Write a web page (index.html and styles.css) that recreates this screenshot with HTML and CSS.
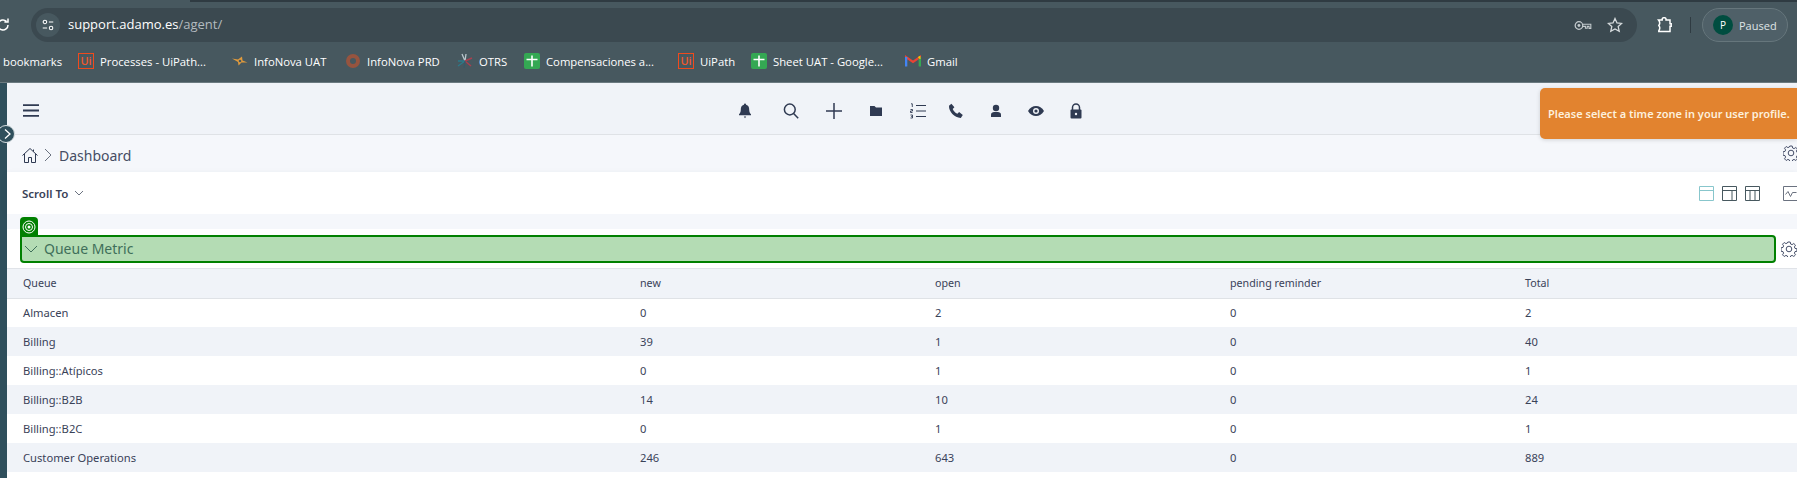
FILE: index.html
```html
<!DOCTYPE html>
<html lang="en">
<head>
  <meta charset="UTF-8" />
  <title>Dashboard</title>
  <link rel="stylesheet" href="styles.css">
</head>
<body>
  <div class="browser">
    <div class="tabstrip"><div class="tab-active"></div><div class="tab-rest"></div></div>
    <div class="toolbar">
      <svg class="reload" viewBox="0 0 16 16"><path d="M13 8a5 5 0 1 1-1.6-3.7M13 1.500v3.600H9.400" fill="none" stroke="#fff" stroke-width="1.500"/></svg>
      <div class="omnibox">
        <span class="tune">
          <svg viewBox="0 0 16 16"><circle cx="4.500" cy="4.500" r="2" fill="none" stroke="#fff" stroke-width="1.200"/><path d="M9 4.500h5M2 11.500h5" stroke="#fff" stroke-width="1.200"/><circle cx="11.500" cy="11.500" r="2" fill="none" stroke="#fff" stroke-width="1.200"/></svg>
        </span>
        <span class="url">support.adamo.es<span class="url-path">/agent/</span></span>
        <svg class="key" viewBox="0 0 20 12"><circle cx="5.500" cy="6" r="4.200" fill="none" stroke="#c4cbce" stroke-width="1.400"/><circle cx="5.500" cy="6" r="1.600" fill="#c4cbce"/><path d="M9.700 4.600h9v4.600h-2V7h-2v2h-2V7H9.700" fill="none" stroke="#c4cbce" stroke-width="1.200"/></svg>
        <svg class="star" viewBox="0 0 16 16"><path d="M8 1.500l2 4.400 4.700.5-3.500 3.200 1 4.700L8 11.900l-4.200 2.400 1-4.700L1.300 6.400l4.700-.5z" fill="none" stroke="#d6dbdd" stroke-width="1.300"/></svg>
      </div>
      <svg class="puzzle" viewBox="0 0 16 16"><path d="M1.500 3h3.700V1.800a1.300 1.300 0 0 1 1.300-1h1.300a1.300 1.300 0 0 1 1.200 1V3h4v3.800h1.200v2.400H13.000v5.300H1.800V13.800q2-2.800 0-5.300 2-2.700-.3-5.500z" fill="none" stroke="#fff" stroke-width="1.500"/></svg>
      <span class="divider"></span>
      <div class="profile"><span class="avatar">P</span><span class="paused">Paused</span></div>
    </div>
    <div class="bookmarks">
      <span class="bm bm-first">bookmarks</span>
      <span class="bm w-processes"><span class="fav-ui">Ui</span>Processes - UiPath...</span>
      <span class="bm w-uat">
        <svg class="fav" viewBox="0 0 16 16"><path d="M0 5.500l6 1 4-3 .5 4 5 2h-6l-3 3-.5-3.500z" fill="#e09a3c"/><circle cx="8" cy="8" r="1.300" fill="#47585f"/></svg>
        InfoNova UAT</span>
      <span class="bm w-prd">
        <svg class="fav" viewBox="0 0 16 16"><circle cx="8" cy="8" r="5" fill="none" stroke="#96543f" stroke-width="4"/></svg>
        InfoNova PRD</span>
      <span class="bm w-otrs">
        <svg class="fav" viewBox="0 0 16 16"><path d="M8 8L5 1M8 8l1-7" stroke="#b9c6cc" stroke-width="1.300"/><path d="M8 8L1 13M8 8H1" stroke="#2c7a8a" stroke-width="1.300"/><path d="M8 8l7-3M8 8l6 5" stroke="#a8404f" stroke-width="1.500"/><path d="M8 8l-1 7" stroke="#355a6a" stroke-width="1.300"/></svg>
        OTRS</span>
      <span class="bm w-comp"><span class="fav-sheet"><svg viewBox="0 0 16 16"><path d="M2.500 6.500h11M8 2.500v11" stroke="#fff" stroke-width="1.600"/></svg></span>Compensaciones a...</span>
      <span class="bm w-uipath"><span class="fav-ui">Ui</span>UiPath</span>
      <span class="bm w-sheet"><span class="fav-sheet"><svg viewBox="0 0 16 16"><path d="M2.500 6.500h11M8 2.500v11" stroke="#fff" stroke-width="1.600"/></svg></span>Sheet UAT - Google...</span>
      <span class="bm">
        <svg class="fav" viewBox="0 0 16 16"><path d="M1 13V4l7 5 7-5v9" fill="none" stroke="#ea4335" stroke-width="2.200"/><path d="M1 13.500V4" stroke="#4285f4" stroke-width="2.600"/><path d="M15 13.500V4" stroke="#34a853" stroke-width="2.600"/><path d="M13 4.500l2-1.200V6" fill="#fbbc04" stroke="#fbbc04"/></svg>
        Gmail</span>
    </div>
  </div>

  <div class="app">
    <aside class="sidebar"></aside>
    <span class="side-toggle"><svg viewBox="0 0 12 12"><path d="M4 1.500L9 6l-5 4.500" fill="none" stroke="#fff" stroke-width="1.300"/></svg></span>
    <main class="content">
      <header class="topbar">
        <svg class="burger" viewBox="0 0 16 13"><path d="M0 1.200h16M0 6.500h16M0 11.800h16" stroke="#2f3a52" stroke-width="1.800"/></svg>
        <nav class="topnav">
          <svg class="nav-icon" viewBox="0 0 16 16"><path d="M8 0.500a1.200 1.200 0 0 1 1.100 1.200c2.400.6 3.100 2.700 3.100 5 0 2.200.8 3.600 1.800 4.500v1H2v-1c1-.9 1.800-2.300 1.800-4.500 0-2.300.7-4.400 3.100-5A1.200 1.200 0 0 1 8 .5zM6.800 13.500h2.400L8 15.300z" fill="#2f3a52"/></svg>
          <svg class="nav-icon nudge-search" viewBox="0 0 16 16"><circle cx="6.800" cy="6.500" r="5.400" fill="none" stroke="#2f3a52" stroke-width="1.500"/><path d="M10.600 10.500l4.600 4.800" stroke="#2f3a52" stroke-width="1.500"/></svg>
          <svg class="nav-icon nudge-plus" viewBox="0 0 16 16"><path d="M0 8h16M8 0v16" stroke="#2f3a52" stroke-width="1.500"/></svg>
          <svg class="nav-icon nudge-two" viewBox="0 0 16 16"><path d="M2 3h4.500l1.500 1.500h6V13H2z" fill="#2f3a52"/></svg>
          <svg class="nav-icon nudge-two" viewBox="0 0 16 16"><path d="M6 2.500h10M6 8h10M6 13.500h10" stroke="#2f3a52" stroke-width="1"/><path d="M1 .8h1.300v3.200M.5 6.500h2v1.500H.5v1.500h2M.5 12h2v1.500h-1 1V15h-2" fill="none" stroke="#2f3a52" stroke-width=".9"/></svg>
          <svg class="nav-icon nudge-phone" viewBox="0 0 16 16"><path d="M1 2.800L3.400.8l3 3.400-1.700 1.700c.9 2 2.500 3.700 4.700 4.900l1.700-1.700 3.700 3-2 2.800C6.600 15 .6 8.600 1 2.800z" fill="#2f3a52"/></svg>
          <svg class="nav-icon" viewBox="0 0 16 16"><circle cx="8" cy="5" r="3.200" fill="#2f3a52"/><path d="M3 14v-2.500C3 9.500 5 9 8 9s5 .5 5 2.500V14z" fill="#2f3a52"/></svg>
          <svg class="nav-icon" viewBox="0 0 16 16"><path d="M0 8c2-3.400 4.800-5 8-5s6 1.600 8 5c-2 3.400-4.800 5-8 5s-6-1.600-8-5z" fill="#2f3a52"/><circle cx="8" cy="8" r="3" fill="#f0f3f8"/><circle cx="8" cy="8" r="1.600" fill="#2f3a52"/></svg>
          <svg class="nav-icon" viewBox="0 0 16 16"><path d="M4.500 7V4.500a3.500 3.500 0 0 1 7 0V7" fill="none" stroke="#2f3a52" stroke-width="1.500"/><rect x="2.500" y="6.500" width="11" height="9" rx="1" fill="#2f3a52"/><circle cx="8" cy="11" r="1.200" fill="#f0f3f8"/></svg>
        </nav>
      </header>

      <div class="crumbs">
        <svg class="home" viewBox="0 0 16 16"><path d="M0.500 8L8 1l7.500 7M2.500 6.500V15H6.500V10H9.500V15H13.500V6.500M11.500 2V4" fill="none" stroke="#2f3a52" stroke-width="1"/></svg>
        <svg class="crumb-sep" viewBox="0 0 8 14"><path d="M1 1l6 6-6 6" fill="none" stroke="#6b7280" stroke-width="1"/></svg>
        <span class="crumb-title">Dashboard</span>
        <svg class="gear gear-crumbs" viewBox="0 0 16 16"><use href="#gear-shape"/></svg>
      </div>

      <div class="scrollbar">
        <span class="scroll-to">Scroll To</span>
        <svg class="chev-small" viewBox="0 0 10 6"><path d="M1 1l4 4 4-4" fill="none" stroke="#6b7280" stroke-width="1"/></svg>
        <div class="layouts">
          <svg class="layout-icon" viewBox="0 0 15 15"><path d="M.5.500h14v14H.5zM.5 4.500h14" fill="none" stroke="#88c6cc"/></svg>
          <svg class="layout-icon" viewBox="0 0 15 15"><path d="M.5.500h14v14H.5zM.5 4.500h14M10 4.500v10" fill="none" stroke="#47585f"/></svg>
          <svg class="layout-icon" viewBox="0 0 15 15"><path d="M.5.500h14v14H.5zM.5 4.500h14M5 4.500v10M10 4.500v10" fill="none" stroke="#47585f"/></svg>
          <svg class="chart-icon" viewBox="0 0 15 15"><path d="M.5.500h14v14H.5zM2.500 8.500l2.500-3 2.500 5 2-4h4" fill="none" stroke="#6b7280"/></svg>
        </div>
      </div>

      <section class="widget">
        <div class="widget-tab">
          <svg viewBox="0 0 14 14"><circle cx="7" cy="7" r="6" fill="none" stroke="#fff"/><circle cx="7" cy="7" r="3.500" fill="none" stroke="#fff"/><circle cx="7" cy="7" r="1.500" fill="#fff"/></svg>
        </div>
        <div class="widget-row">
          <div class="widget-title">
            <svg class="chev-title" viewBox="0 0 14 8"><path d="M1 1l6 6 6-6" fill="none" stroke="#3f6f5a" stroke-width="1"/></svg>
            <span>Queue Metric</span>
          </div>
          <svg class="gear" viewBox="0 0 16 16"><use href="#gear-shape"/></svg>
        </div>
        <table class="metrics">
          <thead>
            <tr><th>Queue</th><th>new</th><th>open</th><th>pending reminder</th><th>Total</th></tr>
          </thead>
          <tbody>
            <tr><td>Almacen</td><td>0</td><td>2</td><td>0</td><td>2</td></tr>
            <tr><td>Billing</td><td>39</td><td>1</td><td>0</td><td>40</td></tr>
            <tr><td>Billing::Atípicos</td><td>0</td><td>1</td><td>0</td><td>1</td></tr>
            <tr><td>Billing::B2B</td><td>14</td><td>10</td><td>0</td><td>24</td></tr>
            <tr><td>Billing::B2C</td><td>0</td><td>1</td><td>0</td><td>1</td></tr>
            <tr><td>Customer Operations</td><td>246</td><td>643</td><td>0</td><td>889</td></tr>
          </tbody>
        </table>
      </section>
    </main>
    <div class="toast">Please select a time zone in your user profile.</div>
  </div>

  <svg class="defs" width="0" height="0">
    <defs>
      <g id="gear-shape" fill="none" stroke="#47506a" stroke-width="1">
        <circle cx="8" cy="8" r="2.800"/>
        <path d="M6.800 1h2.400l.4 2 1.500.6 1.700-1.100 1.700 1.700-1.100 1.700.6 1.500 2 .4v2.400l-2 .4-.6 1.500 1.100 1.700-1.700 1.700-1.700-1.100-1.500.6-.4 2H6.800l-.4-2-1.500-.6-1.700 1.100-1.700-1.700 1.100-1.700-.6-1.500-2-.4V6.800l2-.4.6-1.500-1.100-1.700 1.700-1.700 1.700 1.100 1.500-.6z"/>
      </g>
    </defs>
  </svg>
</body>
</html>
```

FILE: styles.css
```css
* {
  box-sizing: border-box;
}

html, body {
  margin: 0;
  height: 478px;
  overflow: hidden;
}

body {
  font-family: "Noto Sans", sans-serif;
  color: #3a4258;
  background-color: #fff;
}

/* browser chrome */
.browser {
  height: 83px;
  background-color: #47585f;
  border-bottom: 1px solid #6b7a80;
  font-family: "Open Sans", sans-serif;
  color: #fff;
}

.tabstrip {
  display: flex;
  height: 2px;
}

.tab-active {
  width: 190px;
}

.tab-rest {
  flex: 1;
  background-color: #2f3b42;
}

.toolbar {
  display: flex;
  align-items: center;
  height: 34px;
  margin-top: 6px;
}

.reload {
  width: 16px;
  height: 16px;
  margin-left: -5px;
  margin-right: 20px;
}

.omnibox {
  display: flex;
  align-items: center;
  width: 1606px;
  height: 34px;
  padding-left: 5px;
  padding-right: 14px;
  border-radius: 17px;
  background-color: #3b4950;
}

.tune {
  display: flex;
  align-items: center;
  justify-content: center;
  width: 24px;
  height: 24px;
  border-radius: 50%;
  background-color: #47585f;
}

.tune svg {
  width: 14px;
  height: 14px;
}

.url {
  flex: 1;
  margin-left: 8px;
  font-size: 13px;
  line-height: 16px;
  padding-bottom: 2px;
}

.url-path {
  color: #b3bbbf;
}

.key {
  width: 18px;
  height: 11px;
  margin-right: 15px;
}

.star {
  width: 16px;
  height: 16px;
}

.puzzle {
  width: 16px;
  height: 16px;
  margin-left: 20px;
}

.divider {
  width: 1px;
  height: 16px;
  margin-left: 17px;
  background-color: #2f3b42;
}

.profile {
  display: flex;
  align-items: center;
  width: 86px;
  height: 34px;
  margin-left: 11px;
  padding-left: 10px;
  border: 1px solid #66767c;
  border-radius: 17px;
  background-color: #4f6068;
}

.avatar {
  width: 20px;
  height: 20px;
  border-radius: 50%;
  background-color: #004d40;
  font-size: 10px;
  line-height: 20px;
  text-align: center;
}

.paused {
  margin-left: 6px;
  font-size: 11px;
  color: #dfe4e6;
}

.bookmarks {
  display: flex;
  align-items: center;
  height: 24px;
  margin-top: 7px;
  padding-left: 3px;
  font-size: 11.300px;
  white-space: nowrap;
}

.bm {
  display: flex;
  align-items: center;
  gap: 6px;
}

.bm-first { width: 75px; }
.w-processes { width: 154px; }
.w-uat { width: 113px; }
.w-prd { width: 112px; }
.w-otrs { width: 67px; }
.w-comp { width: 154px; }
.w-uipath { width: 73px; }
.w-sheet { width: 154px; }

.fav {
  width: 16px;
  height: 16px;
}

.fav-ui {
  width: 16px;
  height: 16px;
  border: 1.500px solid #f04a1c;
  color: #f0582c;
  font-size: 11px;
  font-weight: 600;
  line-height: 13px;
  text-align: center;
}

.fav-sheet {
  width: 16px;
  height: 16px;
  border-radius: 2px;
  background-color: #34a853;
}

.fav-sheet svg {
  display: block;
}

/* page */
.app {
  position: relative;
  display: flex;
  height: 395px;
}

.sidebar {
  width: 7px;
  background-color: #2f4f5c;
}

.side-toggle {
  position: absolute;
  left: -3px;
  top: 42px;
  display: flex;
  align-items: center;
  justify-content: center;
  width: 18px;
  height: 18px;
  padding-left: 2px;
  border: 1px solid #d5dde0;
  border-radius: 50%;
  background-color: #2f4f5c;
}

.side-toggle svg {
  flex: none;
  width: 12px;
  height: 12px;
}

.content {
  flex: 1;
  min-width: 0;
}

.topbar {
  display: flex;
  align-items: center;
  height: 52px;
  padding-left: 16px;
  padding-top: 4px;
  background-color: #f0f3f8;
  border-bottom: 1px solid #dfe2e6;
}

.burger {
  width: 16px;
  height: 13px;
}

.topnav {
  display: flex;
  align-items: center;
  gap: 24px;
  margin-left: 698px;
}

.nav-icon {
  width: 16px;
  height: 16px;
}

.nudge-search { margin-left: 6px; }
.nudge-plus { margin-left: 3px; }
.nudge-two { margin-left: 2px; }
.nudge-phone { margin-left: -2px; }

.crumbs {
  display: flex;
  align-items: center;
  height: 37px;
  padding-left: 15px;
  padding-top: 3px;
  background-color: #f5f7fb;
}

.home {
  width: 16px;
  height: 17px;
}

.crumb-sep {
  width: 8px;
  height: 14px;
  margin-left: 6px;
}

.crumb-title {
  margin-left: 7px;
  font-size: 14px;
  color: #454d63;
}

.gear {
  flex: none;
  width: 16px;
  height: 16px;
  margin-left: 5px;
}

.gear-crumbs {
  margin-left: auto;
  margin-right: -2px;
  margin-bottom: 4px;
}

.scrollbar {
  display: flex;
  align-items: center;
  height: 42px;
  padding-left: 15px;
  background-color: #fff;
  box-shadow: 0 2px 6px rgba(40, 50, 70, 0.1);
}

.scroll-to {
  font-size: 11.500px;
  font-weight: 600;
}

.chev-small {
  width: 10px;
  height: 6px;
  margin-left: 6px;
}

.layouts {
  display: flex;
  align-items: center;
  gap: 8px;
  margin-left: auto;
  margin-right: -1px;
}

.layout-icon,
.chart-icon {
  width: 15px;
  height: 15px;
}

.chart-icon {
  margin-left: 15px;
}

.widget {
  padding-top: 3px;
  background: linear-gradient(#f5f7fb 15px, #fff 15px);
}

.widget-tab {
  display: flex;
  align-items: center;
  justify-content: center;
  width: 18px;
  height: 19px;
  margin-left: 13px;
  margin-bottom: -1px;
  border-radius: 4px 4px 0 0;
  background-color: #008000;
}

.widget-tab svg {
  width: 14px;
  height: 14px;
}

.widget-row {
  display: flex;
  align-items: center;
  padding-left: 13px;
  padding-bottom: 5px;
  border-bottom: 1px solid #e0e3e8;
}

.widget-title {
  display: flex;
  align-items: center;
  flex: 1;
  height: 28px;
  padding-left: 2px;
  padding-bottom: 1px;
  border: 2px solid #008000;
  border-radius: 0 4px 4px 4px;
  background-color: #b4dcb4;
  font-size: 14px;
  color: #3f6f5a;
}

.chev-title {
  width: 14px;
  height: 8px;
  margin-right: 6px;
}

.metrics {
  width: 100%;
  border-collapse: collapse;
  table-layout: fixed;
  font-size: 11.200px;
}

.metrics th,
.metrics td {
  width: 295px;
  height: 29px;
  padding: 0;
  font-weight: 400;
  text-align: left;
}

.metrics th {
  font-size: 10.700px;
}

.metrics th:first-child,
.metrics td:first-child {
  width: 633px;
  padding-left: 16px;
}

.metrics thead tr {
  background-color: #f0f3f8;
  border-bottom: 1px solid #dfe2e6;
}

.metrics tbody tr:nth-child(even) {
  background-color: #f0f3f8;
}

.toast {
  position: absolute;
  top: 5px;
  right: 0;
  width: 257px;
  height: 51px;
  padding-left: 8px;
  border-radius: 5px 0 0 5px;
  background-color: #e2832f;
  box-shadow: 0 1px 4px rgba(0, 0, 0, 0.15);
  color: #fdf0dd;
  font-size: 11px;
  font-weight: 600;
  line-height: 51px;
  white-space: nowrap;
}

.defs {
  position: absolute;
}
```
